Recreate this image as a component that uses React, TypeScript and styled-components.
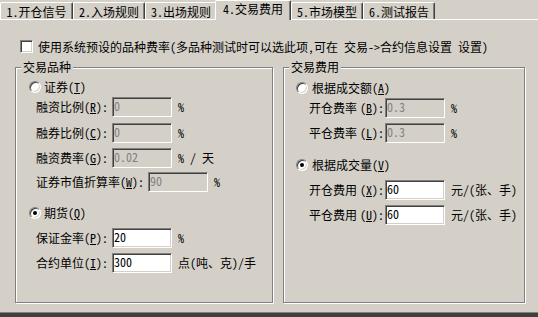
import React from "react";
import styled, { createGlobalStyle } from "styled-components";

const FACE = "#d4d0c8";
const SHADOW = "#808080";
const DARK = "#404040";

const GlobalStyle = createGlobalStyle`
  html, body { margin: 0; padding: 0; background: ${FACE}; }
  body {
    font-family: "Noto Sans Mono CJK SC", "Noto Sans CJK SC", sans-serif;
    font-size: 12px;
    color: #000;
  }
`;

const Window = styled.div`
  width: 538px;
  height: 317px;
  display: flex;
  flex-direction: column;
  background: ${FACE};
  overflow: hidden;
`;

const TabStrip = styled.div`
  height: 19px;
  flex-shrink: 0;
  display: flex;
  align-items: flex-end;
`;

const Tab = styled.div<{ $active?: boolean; $w: number }>`
  box-sizing: border-box;
  width: ${(p) => p.$w}px;
  height: ${(p) => (p.$active ? 20 : 17)}px;
  margin-bottom: ${(p) => (p.$active ? -1 : 0)}px;
  margin-left: ${(p) => (p.$active ? -2 : 0)}px;
  position: relative;
  z-index: ${(p) => (p.$active ? 1 : 0)};
  background: ${FACE};
  border-top: 1px solid #fff;
  border-left: 1px solid #fff;
  border-right: 1px solid ${DARK};
  box-shadow: inset -1px 0 0 ${SHADOW};
  border-radius: 2px 2px 0 0;
  display: flex;
  justify-content: center;
  align-items: flex-start;
  padding-top: ${(p) => (p.$active ? 2 : 3)}px;
  line-height: 12px;
  white-space: nowrap;
`;

const Page = styled.div`
  flex: 1;
  box-sizing: border-box;
  border-top: 1px solid #fff;
  border-bottom: 1px solid ${SHADOW};
  display: flex;
  flex-direction: column;
`;

const BottomEdge = styled.div`
  height: 4px;
  flex-shrink: 0;
  background: ${DARK};
`;

const CheckRow = styled.div`
  margin-top: 20px;
  height: 13px;
  padding-left: 20px;
  display: flex;
  align-items: center;
  gap: 5px;
  line-height: 12px;
  white-space: nowrap;
`;

const CheckBox = styled.span`
  box-sizing: border-box;
  width: 13px;
  height: 13px;
  flex-shrink: 0;
  background: #fff;
  border: 1px solid;
  border-color: ${SHADOW} #fff #fff ${SHADOW};
  box-shadow: inset 1px 1px 0 ${DARK}, inset -1px -1px 0 ${FACE};
`;

const Groups = styled.div`
  margin-top: 14px;
  padding-left: 15px;
  display: flex;
  gap: 10px;
`;

const GroupBox = styled.div<{ $w: number }>`
  position: relative;
  box-sizing: border-box;
  width: ${(p) => p.$w}px;
  height: 236px;
  border: 1px solid ${SHADOW};
  box-shadow: inset 1px 1px 0 #fff, 1px 1px 0 #fff;
  display: flex;
  flex-direction: column;
`;

const GroupTitle = styled.span`
  position: absolute;
  top: -7px;
  left: 5px;
  padding: 0 2px;
  background: ${FACE};
  line-height: 12px;
  white-space: nowrap;
`;

const RadioRow = styled.div<{ $mt: number; $ml: number; $gap: number }>`
  margin-top: ${(p) => p.$mt}px;
  margin-left: ${(p) => p.$ml}px;
  height: 12px;
  display: flex;
  align-items: center;
  gap: ${(p) => p.$gap}px;
  line-height: 12px;
  white-space: nowrap;
`;

const RadioCircle = styled.span<{ $checked?: boolean }>`
  position: relative;
  box-sizing: border-box;
  width: 12px;
  height: 12px;
  flex-shrink: 0;
  border-radius: 50%;
  background: #fff;
  border: 1px solid;
  border-color: ${SHADOW} #fff #fff ${SHADOW};
  box-shadow: inset 1px 1px 0 ${DARK}, inset -1px -1px 0 ${FACE};
  &::after {
    content: "";
    display: ${(p) => (p.$checked ? "block" : "none")};
    position: absolute;
    left: 3px;
    top: 3px;
    width: 4px;
    height: 4px;
    border-radius: 50%;
    background: #000;
  }
`;

const FieldRow = styled.div<{ $mt: number; $ml: number }>`
  margin-top: ${(p) => p.$mt}px;
  margin-left: ${(p) => p.$ml}px;
  height: 20px;
  display: flex;
  align-items: center;
  line-height: 12px;
  white-space: nowrap;
`;

const Label = styled.span<{ $w?: number }>`
  width: ${(p) => p.$w ?? 76}px;
  flex-shrink: 0;
  white-space: nowrap;
`;

const Key = styled.span<{ $gap?: number }>`
  margin-left: ${(p) => p.$gap ?? 0}px;
`;

const Field = styled.input`
  box-sizing: border-box;
  width: 60px;
  height: 20px;
  flex-shrink: 0;
  margin: 0;
  padding: 0 0 4px 1px;
  font: inherit;
  line-height: 12px;
  border: 1px solid;
  border-color: ${SHADOW} #fff #fff ${SHADOW};
  box-shadow: inset 1px 1px 0 ${DARK}, inset -1px -1px 0 ${FACE};
  border-radius: 0;
  outline: none;
  background: #fff;
  color: #000;
  &:disabled {
    background: ${FACE};
    color: ${SHADOW};
    -webkit-text-fill-color: ${SHADOW};
    opacity: 1;
  }
`;

const Unit = styled.span`
  margin-left: 6px;
  white-space: nowrap;
`;

const tabs = [
  { t: "1.开仓信号", w: 73 },
  { t: "2.入场规则", w: 72 },
  { t: "3.出场规则", w: 72 },
  { t: "4.交易费用", w: 76, active: true },
  { t: "5.市场模型", w: 72 },
  { t: "6.测试报告", w: 72 },
];

export default function App() {
  return (
    <>
      <GlobalStyle />
      <Window>
        <TabStrip>
          {tabs.map((tab) => (
            <Tab key={tab.t} $w={tab.w} $active={tab.active}>
              {tab.t}
            </Tab>
          ))}
        </TabStrip>
        <Page>
          <CheckRow>
            <CheckBox />
            <span>使用系统预设的品种费率(多品种测试时可以选此项,可在 交易-&gt;合约信息设置 设置)</span>
          </CheckRow>
          <Groups>
            <GroupBox $w={258}>
              <GroupTitle>交易品种</GroupTitle>
              <RadioRow $mt={13} $ml={13} $gap={3}>
                <RadioCircle />
                <span>
                  证券(<u>T</u>)
                </span>
              </RadioRow>
              <FieldRow $mt={4} $ml={20}>
                <Label>
                  融资比例(<u>R</u>):
                </Label>
                <Field disabled value="0" readOnly />
                <Unit>%</Unit>
              </FieldRow>
              <FieldRow $mt={6} $ml={20}>
                <Label>
                  融券比例(<u>C</u>):
                </Label>
                <Field disabled value="0" readOnly />
                <Unit>%</Unit>
              </FieldRow>
              <FieldRow $mt={5} $ml={20}>
                <Label>
                  融资费率(<u>G</u>):
                </Label>
                <Field disabled value="0.02" readOnly />
                <Unit>% / 天</Unit>
              </FieldRow>
              <FieldRow $mt={4} $ml={20}>
                <Label $w={112}>
                  证券市值折算率(<u>W</u>):
                </Label>
                <Field disabled value="90" readOnly />
                <Unit>%</Unit>
              </FieldRow>
              <RadioRow $mt={15} $ml={13} $gap={3}>
                <RadioCircle $checked />
                <span>
                  期货(<u>Q</u>)
                </span>
              </RadioRow>
              <FieldRow $mt={9} $ml={20}>
                <Label>
                  保证金率(<u>P</u>):
                </Label>
                <Field value="20" readOnly />
                <Unit>%</Unit>
              </FieldRow>
              <FieldRow $mt={5} $ml={20}>
                <Label>
                  合约单位(<u>I</u>):
                </Label>
                <Field value="300" readOnly />
                <Unit>点(吨、克)/手</Unit>
              </FieldRow>
            </GroupBox>
            <GroupBox $w={242}>
              <GroupTitle>交易费用</GroupTitle>
              <RadioRow $mt={14} $ml={12} $gap={4}>
                <RadioCircle />
                <span>
                  根据成交额(<u>A</u>)
                </span>
              </RadioRow>
              <FieldRow $mt={4} $ml={25}>
                <Label>
                  开仓费率<Key $gap={3}>(<u>B</u>):</Key>
                </Label>
                <Field disabled value="0.3" readOnly />
                <Unit>%</Unit>
              </FieldRow>
              <FieldRow $mt={5} $ml={25}>
                <Label>
                  平仓费率<Key $gap={3}>(<u>L</u>):</Key>
                </Label>
                <Field disabled value="0.3" readOnly />
                <Unit>%</Unit>
              </FieldRow>
              <RadioRow $mt={16} $ml={12} $gap={4}>
                <RadioCircle $checked />
                <span>
                  根据成交量(<u>V</u>)
                </span>
              </RadioRow>
              <FieldRow $mt={9} $ml={25}>
                <Label>
                  开仓费用<Key $gap={3}>(<u>X</u>):</Key>
                </Label>
                <Field value="60" readOnly />
                <Unit>元/(张、手)</Unit>
              </FieldRow>
              <FieldRow $mt={5} $ml={25}>
                <Label>
                  平仓费用<Key $gap={3}>(<u>U</u>):</Key>
                </Label>
                <Field value="60" readOnly />
                <Unit>元/(张、手)</Unit>
              </FieldRow>
            </GroupBox>
          </Groups>
        </Page>
        <BottomEdge />
      </Window>
    </>
  );
}
